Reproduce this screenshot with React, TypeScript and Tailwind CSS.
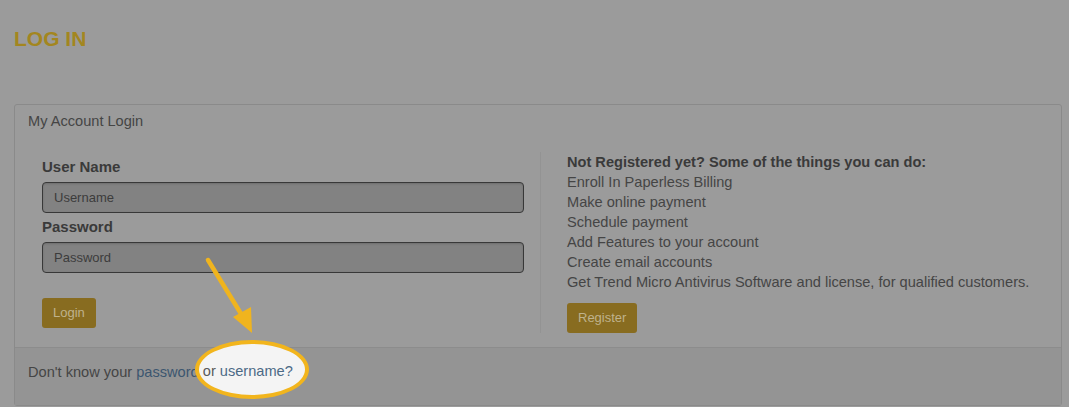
import React from "react";

const features = [
  "Enroll In Paperless Billing",
  "Make online payment",
  "Schedule payment",
  "Add Features to your account",
  "Create email accounts",
  "Get Trend Micro Antivirus Software and license, for qualified customers.",
];

const Field: React.FC<{ label: string; placeholder: string; className?: string }> = ({
  label,
  placeholder,
  className,
}) => (
  <div className={"flex flex-col " + (className ?? "")}>
    <label className="text-[15px] leading-5 font-bold text-[#3a3a3a]">{label}</label>
    <input
      type="text"
      placeholder={placeholder}
      className="mt-[5px] h-[31px] w-full rounded-[4px] border-[1.5px] border-[#383838] bg-[#828282] px-[11px] text-[13px] text-[#3c3c3c] placeholder:text-[#3c3c3c] shadow-[inset_0_1px_2px_rgba(0,0,0,0.15)] outline-none"
    />
  </div>
);

const GoldButton: React.FC<{ children: React.ReactNode; className?: string }> = ({
  children,
  className,
}) => (
  <button
    className={
      "h-[30px] rounded-[3px] bg-[#886c20] px-[11px] text-[13px] text-[#bfb28c] " +
      (className ?? "")
    }
  >
    {children}
  </button>
);

export default function App() {
  return (
    <div
      className="relative h-[407px] w-full overflow-hidden bg-[#9b9b9b]"
      style={{ fontFamily: '"Liberation Sans", Arial, sans-serif' }}
    >
      {/* page title */}
      <div className="px-[14px] pt-[27px]">
        <h1 className="text-[21px] leading-6 font-bold text-[#a3861f]">LOG IN</h1>
      </div>

      {/* login panel */}
      <div className="mt-[53px] ml-[14px] mr-[7px] rounded-[3px] border border-[#8a8a8a]">
        <div className="px-[13px] pt-[6px] pb-[7px] text-[14.6px] leading-5 text-[#454545]">
          My Account Login
        </div>

        <div className="flex pl-[27px] pt-[14px] pb-[14px]">
          <div className="w-[482px] shrink-0 pt-[5px]">
            <Field label="User Name" placeholder="Username" />
            <Field label="Password" placeholder="Password" className="mt-[4px]" />
            <GoldButton className="mt-[25px]">Login</GoldButton>
          </div>

          <div className="ml-[16px] w-px bg-[#939393]" />

          <div className="ml-[26px] text-[14.6px] leading-5 text-[#454545]">
            <div className="font-bold text-[#3a3a3a]">
              Not Registered yet? Some of the things you can do:
            </div>
            {features.map((f) => (
              <div key={f}>{f}</div>
            ))}
            <GoldButton className="mt-[11px]">Register</GoldButton>
          </div>
        </div>

        <div className="border-t border-[#8c8c8c] bg-[#949494] px-[13px] pt-[14px] pb-[23px] text-[14.6px] leading-5 text-[#454545]">
          Don't know your <span className="text-[#3c566f]">password</span> or{" "}
          <span className="text-[#3c566f]">username?</span>
        </div>
      </div>

      {/* spotlight on "username?" */}
      <div className="absolute left-[195px] top-[340px] h-[59px] w-[114px] overflow-hidden rounded-[50%] border-[4px] border-[#f2b51d] bg-[#f4f4f4]">
        <div className="absolute left-[-171px] top-[17px] whitespace-nowrap text-[14.6px] leading-5 text-[#5a5a5a]">
          Don't know your <span className="text-[#4c6a86]">password</span> or{" "}
          <span className="text-[#4c6a86]">username?</span>
        </div>
      </div>

      {/* pointer arrow */}
      <svg
        className="pointer-events-none absolute left-0 top-0"
        width="1069"
        height="407"
        viewBox="0 0 1069 407"
      >
        <line
          x1="208"
          y1="260"
          x2="243"
          y2="317"
          stroke="#f0b41e"
          strokeWidth="4.5"
          strokeLinecap="round"
        />
        <polygon points="252,333 233,317 251,307" fill="#f0b41e" />
      </svg>
    </div>
  );
}
